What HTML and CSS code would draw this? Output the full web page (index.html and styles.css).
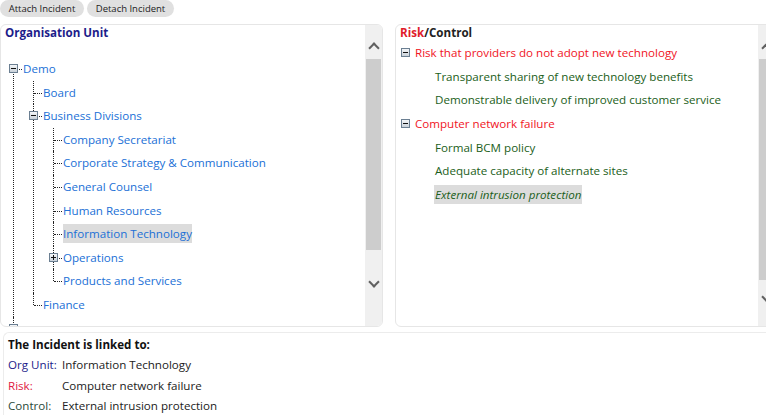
FILE: index.html
```html
<!DOCTYPE html>
<html lang="en">
<head>
    <meta charset="UTF-8">
    <title>Incident Links</title>
    <link rel="stylesheet" href="styles.css">
</head>
<body>
    <div class="toolbar">
        <button class="pill">Attach Incident</button>
        <button class="pill">Detach Incident</button>
    </div>

    <div class="panels">
        <div class="panel panel-org">
            <div class="panel-body">
                <div class="panel-title org-title">Organisation Unit</div>
                <ul class="tree root">
                    <li class="open">
                        <span class="toggle minus"></span><span class="node">Demo</span>
                        <ul>
                            <li><span class="node">Board</span></li>
                            <li class="open">
                                <span class="toggle minus"></span><span class="node">Business Divisions</span>
                                <ul>
                                    <li><span class="node">Company Secretariat</span></li>
                                    <li><span class="node">Corporate Strategy &amp; Communication</span></li>
                                    <li><span class="node">General Counsel</span></li>
                                    <li><span class="node">Human Resources</span></li>
                                    <li><span class="node selected">Information Technology</span></li>
                                    <li><span class="toggle plus"></span><span class="node">Operations</span></li>
                                    <li><span class="node">Products and Services</span></li>
                                </ul>
                            </li>
                            <li><span class="node">Finance</span></li>
                        </ul>
                    </li>
                    <li><span class="toggle plus"></span><span class="node"></span></li>
                </ul>
            </div>
            <div class="scrollbar">
                <div class="arrow up"></div>
                <div class="thumb thumb-org"></div>
                <div class="arrow down"></div>
            </div>
        </div>

        <div class="panel panel-risk">
            <div class="panel-body">
                <div class="panel-title"><span class="risk-word">Risk</span>/Control</div>
                <div class="risk-row"><span class="toggle minus"></span><span class="risk">Risk that providers do not adopt new technology</span></div>
                <div class="control-row"><span class="control">Transparent sharing of new technology benefits</span></div>
                <div class="control-row"><span class="control">Demonstrable delivery of improved customer service</span></div>
                <div class="risk-row"><span class="toggle minus"></span><span class="risk">Computer network failure</span></div>
                <div class="control-row"><span class="control">Formal BCM policy</span></div>
                <div class="control-row"><span class="control">Adequate capacity of alternate sites</span></div>
                <div class="control-row"><span class="control selected italic">External intrusion protection</span></div>
            </div>
            <div class="scrollbar">
                <div class="arrow up"></div>
                <div class="thumb thumb-risk"></div>
                <div class="arrow down"></div>
            </div>
        </div>
    </div>

    <div class="summary">
        <div class="summary-title">The Incident is linked to:</div>
        <div class="summary-row"><span class="label label-org">Org Unit:</span><span>Information Technology</span></div>
        <div class="summary-row"><span class="label label-risk">Risk:</span><span>Computer network failure</span></div>
        <div class="summary-row"><span class="label label-control">Control:</span><span>External intrusion protection</span></div>
    </div>
</body>
</html>
```

FILE: styles.css
```css
body {
    font-family: "Open Sans", Arial, sans-serif;
    font-size: 11.6px;
    color: #222;
    background-color: #fff;
    margin: 0;
    width: 766px;
    height: 415px;
    overflow: hidden;
}

.toolbar {
    display: flex;
    gap: 3px;
    height: 24px;
}

.pill {
    font-family: inherit;
    font-size: 9.5px;
    color: #222;
    background-color: #e0e0e0;
    border: none;
    border-radius: 9px;
    height: 17px;
    padding: 0;
    white-space: nowrap;
}

.pill:first-child {
    width: 84px;
}

.pill:last-child {
    width: 87px;
}

.panels {
    display: flex;
    gap: 12px;
    width: 776px;
}

.panel {
    display: flex;
    height: 301px;
    border: 1px solid #e6e6e6;
    border-radius: 6px;
    overflow: hidden;
}

.panel-org {
    width: 381px;
}

.panel-risk {
    width: 379px;
}

.panel-body {
    flex: 1;
    overflow: hidden;
    padding: 0 4px;
}

.panel-title {
    font-weight: bold;
    color: #222;
    height: 16px;
    line-height: 16px;
}

.org-title {
    color: #1c1c8a;
    height: 32px;
}

.risk-word {
    color: #e01b2a;
}

/* scrollbar */
.scrollbar {
    width: 17px;
    background-color: #f0f0f0;
    display: flex;
    flex-direction: column;
}

.arrow {
    height: 34px;
    display: flex;
    align-items: center;
    justify-content: center;
}

.arrow::before {
    content: "";
    width: 6px;
    height: 6px;
    border-left: 2px solid #606060;
    border-top: 2px solid #606060;
    transform: rotate(45deg);
}

.arrow.up::before {
    margin-top: 12px;
}

.arrow.down::before {
    transform: rotate(225deg);
    margin-bottom: 12px;
}

.thumb {
    background-color: #cdcdcd;
    margin: 0 1px;
}

.thumb-org {
    height: 191px;
}

.thumb-risk {
    height: 221px;
}

.scrollbar .thumb + .arrow {
    flex: 1;
}

/* tree */
.tree,
.tree ul {
    list-style: none;
    margin: 0;
    padding: 0 0 0 10px;
}

.tree.root {
    padding-left: 8px;
}

.tree li {
    position: relative;
    padding-left: 10px;
}

.tree li::before {
    content: "";
    position: absolute;
    left: 0;
    top: 0;
    bottom: 0;
    border-left: 1px dotted #222;
}

.tree li:last-child::before {
    bottom: auto;
    height: 12px;
}

.tree li::after {
    content: "";
    position: absolute;
    left: 1px;
    top: 12px;
    width: 8px;
    border-top: 1px dotted #222;
}

.tree.root > li:first-child::before {
    top: 12px;
}

.node {
    display: inline-block;
    height: 19px;
    line-height: 19px;
    margin: 2px 0 2.6px;
    color: #2170d6;
}

.selected {
    background-color: #dcdcdc;
}

.toggle {
    position: absolute;
    left: -4px;
    top: 7px;
    width: 7px;
    height: 7px;
    border: 1px solid #6b7f92;
    background: linear-gradient(#f4f6f8, #c9d1d9);
    z-index: 1;
}

.toggle.minus::before,
.toggle.plus::before {
    content: "";
    position: absolute;
    left: 1px;
    top: 3px;
    width: 5px;
    height: 1px;
    background-color: #111;
}

.toggle.plus::after {
    content: "";
    position: absolute;
    left: 3px;
    top: 1px;
    width: 1px;
    height: 5px;
    background-color: #111;
}

/* risk / control list */
.risk-row,
.control-row {
    display: flex;
    align-items: center;
    height: 23.6px;
}

.risk-row {
    position: relative;
    padding-left: 15px;
}

.risk-row .toggle {
    left: 1px;
    top: 7px;
}

.control-row {
    padding-left: 34px;
}

.risk {
    color: #f0141e;
}

.control {
    color: #1b5e20;
    padding: 2px 1px;
}

.italic {
    font-style: italic;
}

/* summary */
.summary {
    margin: 5px 0 0 3px;
    padding: 2px 4px 0;
    border-top: 1px solid #ececec;
    border-left: 1px solid #ececec;
    border-top-left-radius: 6px;
}

.summary-title {
    font-weight: bold;
    color: #111;
    height: 20px;
    line-height: 20px;
}

.summary-row {
    display: flex;
    height: 20.5px;
    line-height: 20.5px;
}

.label {
    width: 54px;
}

.label-org {
    color: #1c1c8a;
}

.label-risk {
    color: #e0193f;
}

.label-control {
    color: #2a4a3a;
}
```
